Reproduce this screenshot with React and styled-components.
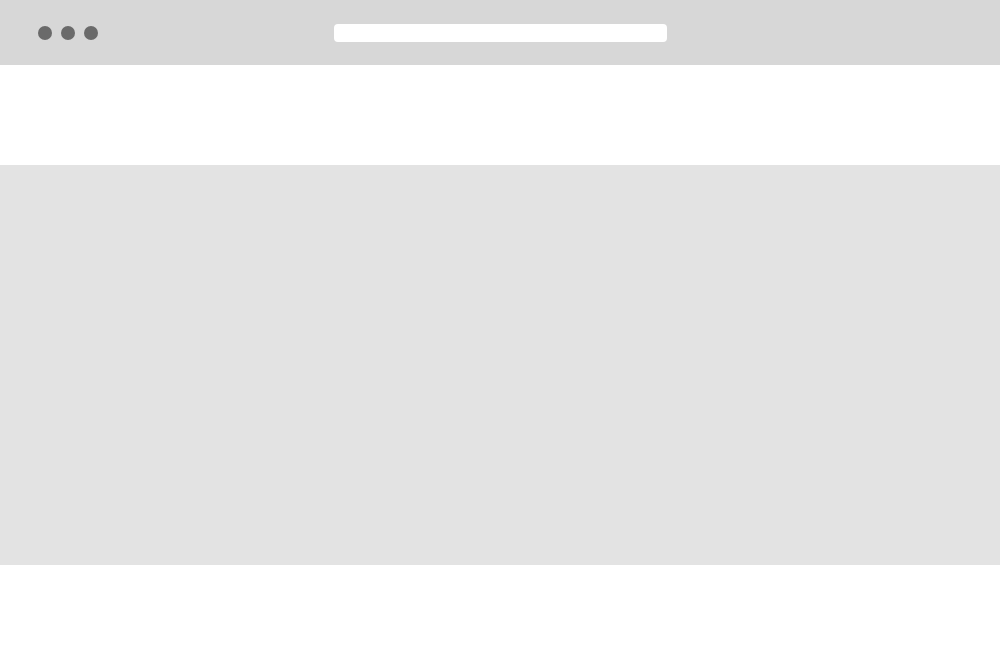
import React from "react";
import styled, { createGlobalStyle } from "styled-components";

const Global = createGlobalStyle`
  html, body { margin: 0; padding: 0; background: #ffffff; }
  body { font-family: "Liberation Sans", Arial, sans-serif; }
  #root { min-height: 666px; }
`;

const Page = styled.div`
  width: 1000px;
  height: 666px;
  display: flex;
  flex-direction: column;
  background: #ffffff;
  overflow: hidden;
`;

const Toolbar = styled.header`
  height: 65px;
  flex: none;
  background: #d7d7d7;
  display: grid;
  grid-template-columns: 1fr 333px 1fr;
  align-items: center;
`;

const Dots = styled.div`
  display: flex;
  gap: 9px;
  padding-left: 38px;
`;

const Dot = styled.span`
  width: 14px;
  height: 14px;
  border-radius: 50%;
  background: #6a6a6a;
`;

const Address = styled.div`
  height: 18px;
  background: #ffffff;
  border-radius: 4px;
`;

const Band = styled.section`
  flex: none;
  height: ${(p) => p.$h}px;
  background: ${(p) => p.$bg};
`;

const Rest = styled.section`
  flex: 1;
  background: #ffffff;
`;

export default function App() {
  return (
    <>
      <Global />
      <Page>
        <Toolbar>
          <Dots>
            <Dot />
            <Dot />
            <Dot />
          </Dots>
          <Address />
          <div />
        </Toolbar>
        <Band $h={100} $bg="#ffffff" />
        <Band $h={400} $bg="#e3e3e3" />
        <Rest />
      </Page>
    </>
  );
}
